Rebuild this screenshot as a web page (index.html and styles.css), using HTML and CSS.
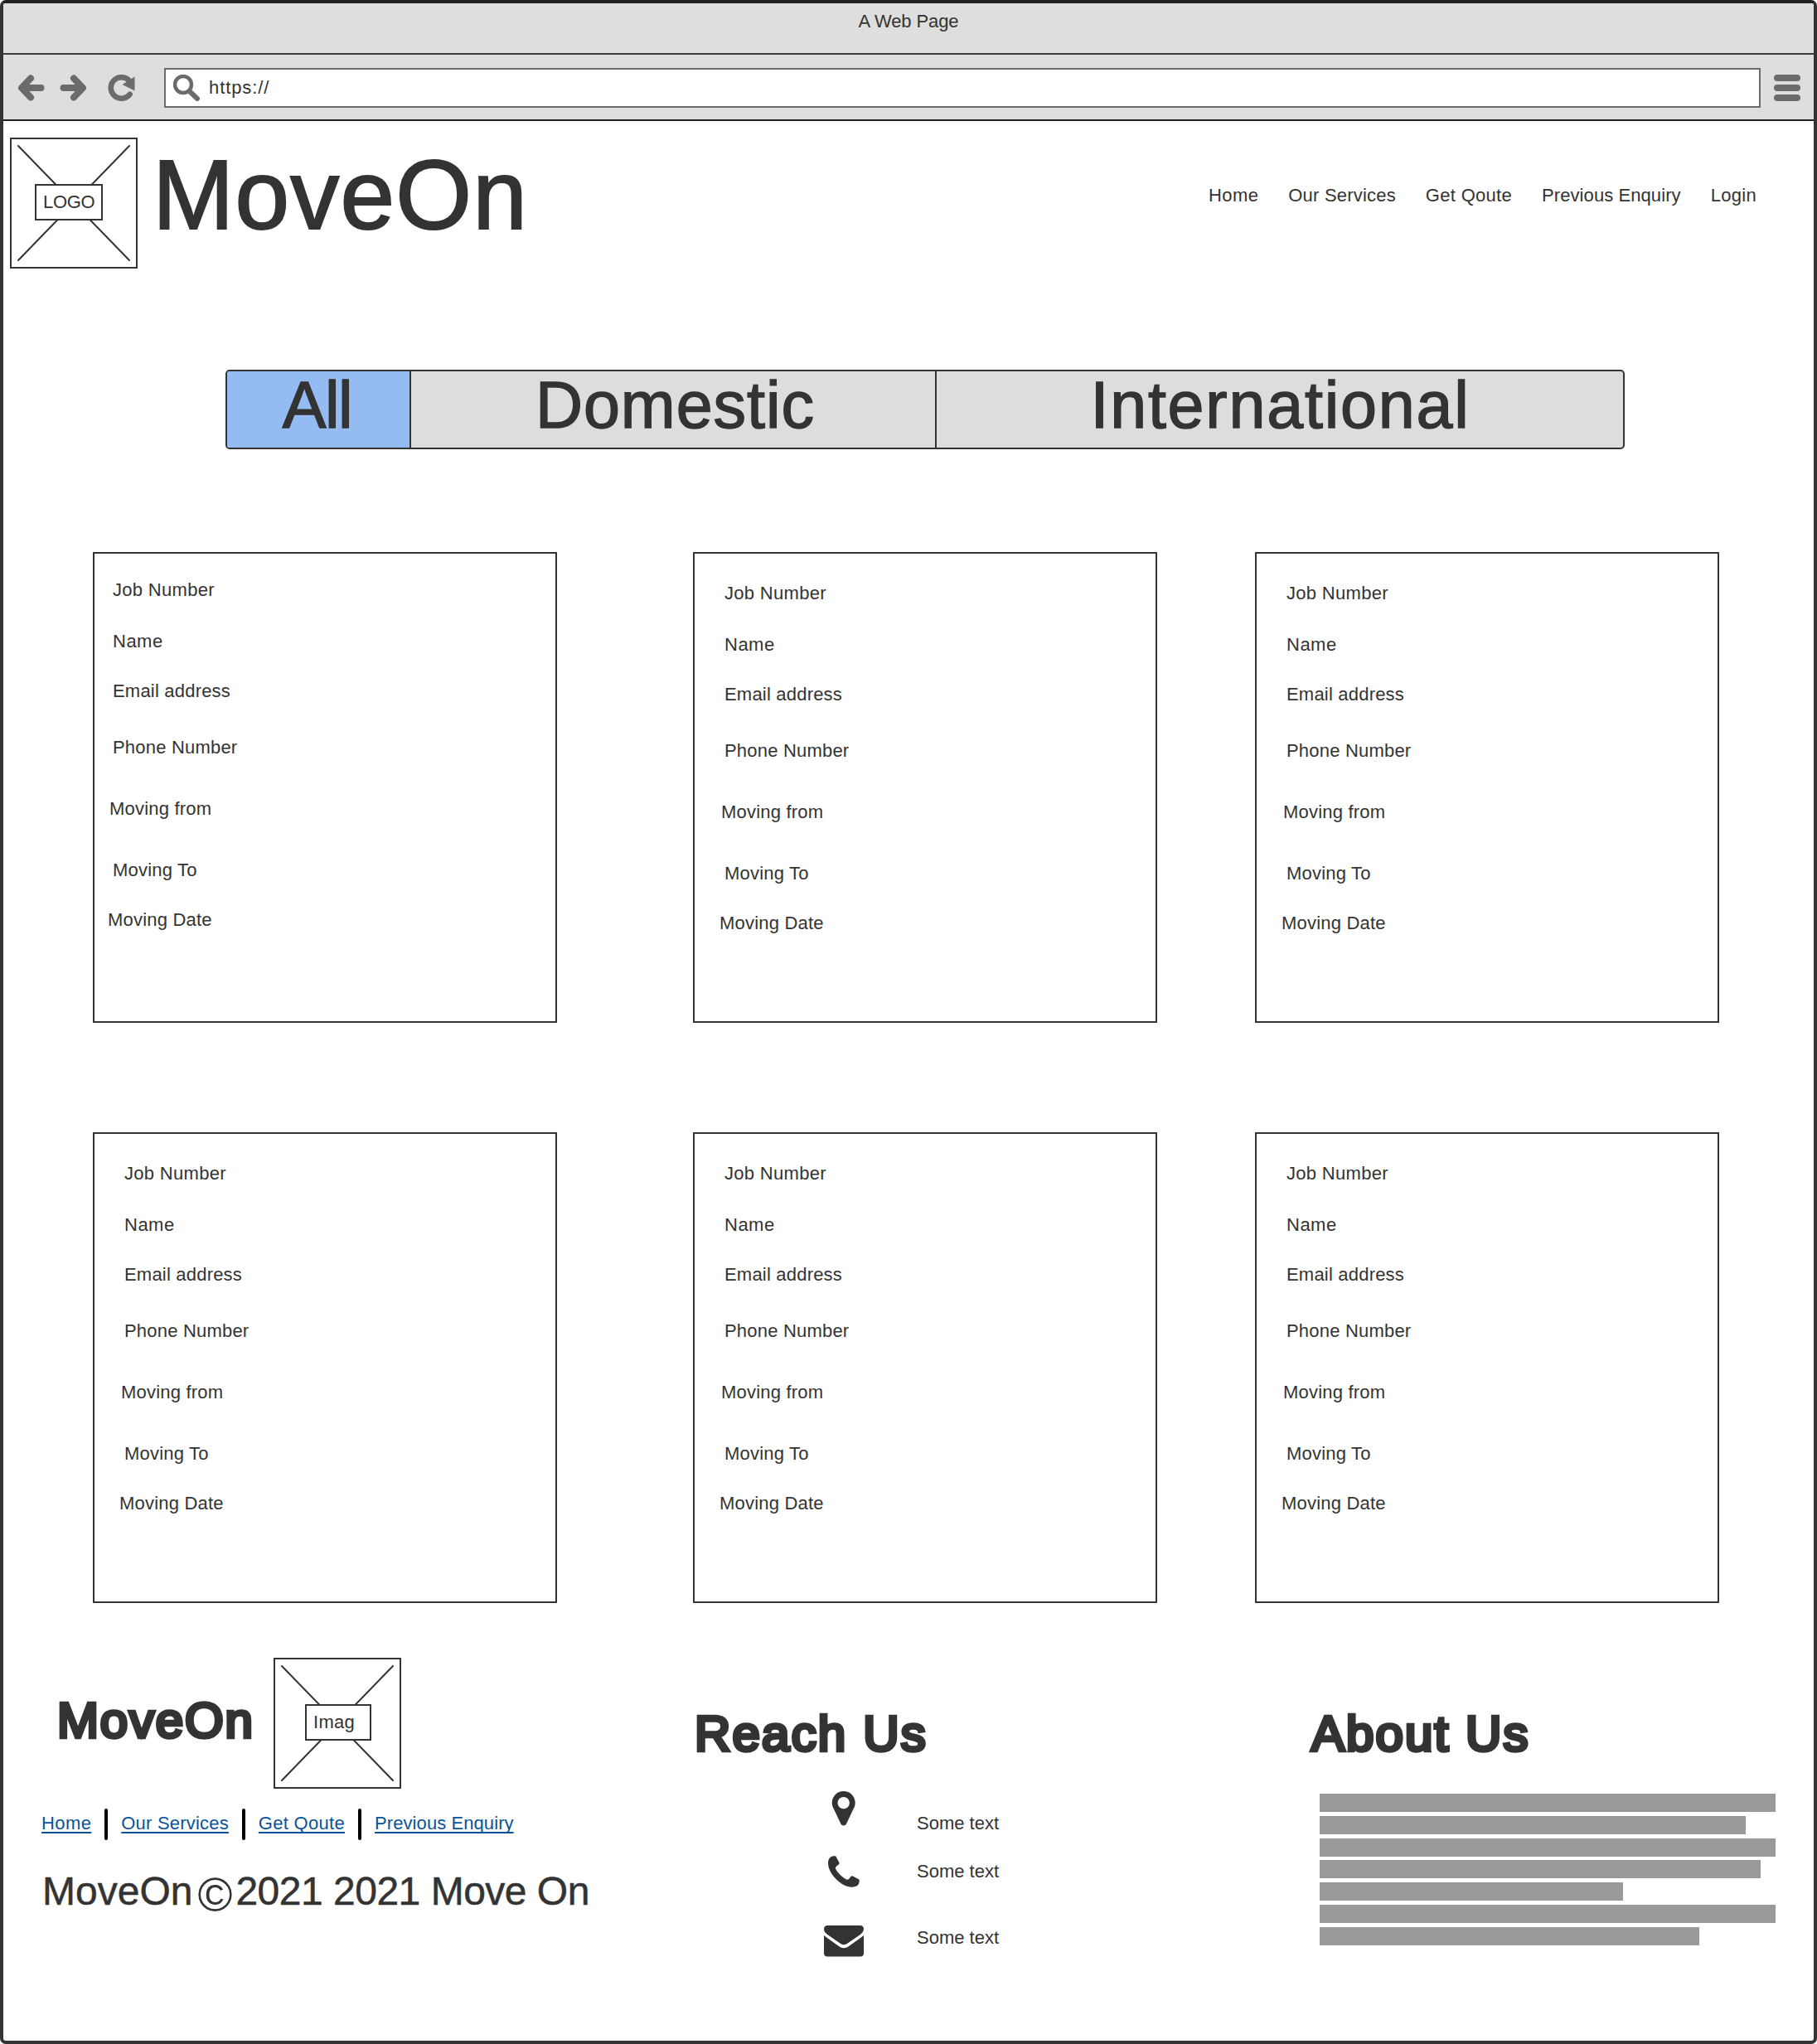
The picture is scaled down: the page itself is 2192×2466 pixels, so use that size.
FILE: index.html
```html
<!DOCTYPE html>
<html lang="en">
<head>
<meta charset="utf-8">
<title>A Web Page</title>
<link rel="stylesheet" href="styles.css">
</head>
<body>
<div class="window">
  <div class="titlebar">A Web Page</div>
  <div class="toolbar">
    <svg class="tool back" viewBox="0 0 32 32"><path d="M15.500 4.500L4.500 16L15.500 27.500M5 16H28"/></svg>
    <svg class="tool forward" viewBox="0 0 32 32"><path d="M16.500 4.500L27.500 16L16.500 27.500M27 16H4"/></svg>
    <svg class="tool reload" viewBox="0 0 32 32"><path class="ring" d="M25 6.800A12.800 12.800 0 1 0 26.200 23.700"/><path class="tip" d="M32 2.500V19.500L17 12Z"/></svg>
    <div class="address">
      <svg class="search" viewBox="0 0 32 32"><circle cx="12" cy="12" r="10"/><path d="M19.500 20L29 29"/></svg>
      <span class="url">https://</span>
    </div>
    <div class="menu"><i></i><i></i><i></i></div>
  </div>

  <header class="header">
    <div class="picture">
      <svg viewBox="0 0 150 154"><path d="M8 8L142 146M142 8L8 146"/></svg>
      <span class="caption">LOGO</span>
    </div>
    <h1 class="title">MoveOn</h1>
    <nav class="nav">
      <a class="nav-home">Home</a>
      <a class="nav-services">Our Services</a>
      <a class="nav-quote">Get Qoute</a>
      <a class="nav-enquiry">Previous Enquiry</a>
      <a class="nav-login">Login</a>
    </nav>
  </header>

  <div class="tabs">
    <div class="tab tab-all">All</div>
    <div class="tab tab-domestic">Domestic</div>
    <div class="tab tab-international">International</div>
  </div>

  <main class="jobs">
    <section class="card card-first">
      <p class="job">Job Number</p><p class="name">Name</p><p class="email">Email address</p><p class="phone">Phone Number</p><p class="from">Moving from</p><p class="to">Moving To</p><p class="date">Moving Date</p>
    </section>
    <section class="card">
      <p class="job">Job Number</p><p class="name">Name</p><p class="email">Email address</p><p class="phone">Phone Number</p><p class="from">Moving from</p><p class="to">Moving To</p><p class="date">Moving Date</p>
    </section>
    <section class="card">
      <p class="job">Job Number</p><p class="name">Name</p><p class="email">Email address</p><p class="phone">Phone Number</p><p class="from">Moving from</p><p class="to">Moving To</p><p class="date">Moving Date</p>
    </section>
    <section class="card">
      <p class="job">Job Number</p><p class="name">Name</p><p class="email">Email address</p><p class="phone">Phone Number</p><p class="from">Moving from</p><p class="to">Moving To</p><p class="date">Moving Date</p>
    </section>
    <section class="card">
      <p class="job">Job Number</p><p class="name">Name</p><p class="email">Email address</p><p class="phone">Phone Number</p><p class="from">Moving from</p><p class="to">Moving To</p><p class="date">Moving Date</p>
    </section>
    <section class="card">
      <p class="job">Job Number</p><p class="name">Name</p><p class="email">Email address</p><p class="phone">Phone Number</p><p class="from">Moving from</p><p class="to">Moving To</p><p class="date">Moving Date</p>
    </section>
  </main>

  <footer class="footer">
    <section class="brand">
      <div class="brand-row">
        <h2 class="brand-name">MoveOn</h2>
        <div class="picture">
          <svg viewBox="0 0 150 154"><path d="M8 8L142 146M142 8L8 146"/></svg>
          <span class="caption caption-image">Imag</span>
        </div>
      </div>
      <div class="links">
        <a class="nav-home">Home</a><i class="bar"></i>
        <a class="nav-services">Our Services</a><i class="bar"></i>
        <a class="nav-quote">Get Qoute</a><i class="bar"></i>
        <a class="nav-enquiry">Previous Enquiry</a>
      </div>
      <div class="copyright"><span>MoveOn</span><span class="sign">©</span><span class="years">2021 2021 Move On</span></div>
    </section>

    <section class="reach">
      <h2 class="reach-title">Reach Us</h2>
      <div class="contact contact-place">
        <svg viewBox="0 0 48 42"><path fill-rule="evenodd" d="M23.700 0C31.500 0 37.700 6.200 37.700 14C37.700 17 36.800 19 35.500 21.600L27 39.500C25.800 42.100 21.600 42.100 20.400 39.500L11.900 21.600C10.600 19 9.700 17 9.700 14C9.700 6.200 16 0 23.700 0ZM23.700 6.900A7.200 7.200 0 1 0 23.700 21.300A7.200 7.200 0 1 0 23.700 6.900Z"/></svg>
        <span>Some text</span>
      </div>
      <div class="contact contact-phone">
        <svg viewBox="0 0 48 38"><path d="M5 9C5 4.500 7 1.500 9.500 .7C11 .2 12.500 .1 13.800 .3C14.500 .5 15 1.500 15.400 2.500L18.200 7.800C18.900 9.200 18.500 9.700 17.300 10.800C15.500 12.200 13.900 13.200 13.900 14.600C13.900 17.500 21.500 26.500 28 28.600C29.800 29.200 31 26.800 32.200 25.300C33 24.200 33.800 24 34.800 24.500L41.500 28C42.800 28.700 42.900 29.200 42.700 30.500C42.400 33 41.700 35.300 39.800 36.300C35 38.800 28 38.200 20.500 33C11.500 26.700 5 17 5 9Z"/></svg>
        <span>Some text</span>
      </div>
      <div class="contact contact-mail">
        <svg viewBox="0 0 48 38"><path d="M4.500 0H43.500C46.500 0 48 1.700 48 4C48 7 46 9.500 43.500 11.300L30 20.500C28 22 26 23.300 24 23.300C22 23.300 20 22 18 20.500L4.500 11.300C2 9.500 0 7 0 4.500C0 1.700 1.500 0 4.500 0Z"/><path d="M0 12C5 16 11 20 16.500 24C19 26 21.500 27.300 24 27.300C26.500 27.300 29 26 31.500 24C37 20 43 16 48 12V33.500C48 36 46.500 37.500 44 37.500H4C1.500 37.500 0 36 0 33.500Z"/></svg>
        <span>Some text</span>
      </div>
    </section>

    <section class="about">
      <h2 class="about-title">About Us</h2>
      <div class="lines">
        <i style="width:550px"></i><i style="width:514px"></i><i style="width:550px"></i><i style="width:532px"></i><i style="width:366px"></i><i style="width:550px"></i><i style="width:458px"></i>
      </div>
    </section>
  </footer>
</div>
</body>
</html>
```
FILE: styles.css
```css
* { box-sizing: border-box; margin: 0; padding: 0; }
body {
  font: 22px/26px "Liberation Sans", Arial, sans-serif;
  color: #333;
  background: #fff;
}
svg { display: block; }

.window {
  width: 2192px;
  height: 2466px;
  border: 4px solid #333;
  border-top-color: #231f20;
  border-radius: 7px;
  overflow: hidden;
}

/* Browser chrome */
.titlebar {
  height: 62px;
  padding-top: 9px;
  border-bottom: 2px solid #3c3c3c;
  background: #dededc;
  text-align: center;
  letter-spacing: -0.1px;
}
.toolbar {
  display: flex;
  align-items: flex-start;
  height: 80px;
  padding: 16px 16px 0 17px;
  border-bottom: 2px solid #231f20;
  background: #dededc;
}
.tool {
  width: 33px;
  height: 32px;
  margin-top: 8px;
  fill: none;
  stroke: #6b6b6b;
  stroke-width: 8px;
  stroke-linecap: round;
  stroke-linejoin: round;
}
.forward { margin-left: 18px; }
.reload { margin-left: 25px; }
.reload .ring { stroke-width: 6.500px; }
.reload .tip { fill: #6b6b6b; stroke: none; }
.address {
  display: flex;
  flex: 1;
  height: 48px;
  margin-left: 35px;
  padding: 6px 0 0 9px;
  border: 2px solid #6b6b6b;
  background: #fff;
}
.search {
  width: 32px;
  height: 32px;
  fill: none;
  stroke: #6b6b6b;
  stroke-width: 4.500px;
  stroke-linecap: round;
}
.search path { stroke-width: 6px; }
.url { margin: 3px 0 0 11px; letter-spacing: 0.9px; }
.menu {
  display: grid;
  gap: 4px;
  width: 32px;
  margin: 8px 0 0 16px;
}
.menu i { height: 8px; border-radius: 4px; background: #6b6b6b; }

/* Page header */
.header {
  display: flex;
  align-items: flex-start;
  height: 300px;
  padding: 20px 69px 0 8px;
}
.picture {
  display: grid;
  width: 154px;
  height: 158px;
  border: 2px solid #333;
}
.picture svg, .caption { grid-area: 1 / 1; }
.picture svg { width: 150px; height: 154px; fill: none; stroke: #333; stroke-width: 2px; stroke-linecap: round; }
.caption {
  z-index: 1;
  width: 82px;
  height: 44px;
  margin: 54px 0 0 28px;
  padding: 7px 0 0 8px;
  border: 2px solid #333;
  background: #fff;
  letter-spacing: -0.3px;
}
.caption-image { width: 80px; margin-left: 36px; letter-spacing: 0.3px; }
.title {
  margin: 10px 0 0 18px;
  font-size: 118px;
  line-height: 118px;
  font-weight: 400;
  letter-spacing: 1.200px;
  -webkit-text-stroke: 2px #333;
}
.nav { display: flex; gap: 36px; margin: 57px 0 0 auto; }
.nav-home { letter-spacing: 0.4px; }
.nav-services { letter-spacing: 0.2px; }
.nav-quote { letter-spacing: 0.3px; }
.nav-enquiry { letter-spacing: 0.08px; }
.nav-login { letter-spacing: 0.3px; }

/* Filter tabs */
.tabs {
  display: grid;
  grid-template-columns: 220px 634px 1fr;
  width: 1688px;
  height: 96px;
  margin-left: 268px;
  border: 2px solid #333;
  border-radius: 5px;
  background: #ddd;
  font-size: 79px;
  line-height: 81px;
  text-align: center;
  -webkit-text-stroke: 1.500px #333;
}
.tab + .tab { border-left: 2px solid #333; }
.tab-all { border-radius: 3px 0 0 3px; background: #94bbf2; letter-spacing: -1.500px; padding-right: 3px; }
.tab-domestic { letter-spacing: 1px; padding-left: 5px; }
.tab-international { letter-spacing: 1.800px; padding-left: 1px; }

/* Job cards */
.jobs {
  display: grid;
  grid-template-columns: 724px 678px 560px;
  grid-auto-rows: 568px;
  row-gap: 132px;
  margin: 124px 0 0 108px;
}
.card {
  width: 560px;
  padding: 35px 0 0 36px;
  border: 2px solid #333;
  letter-spacing: 0.2px;
}
.card-first { padding: 31px 0 0 22px; }
.job { letter-spacing: 0.3px; }
.name { margin-top: 36px; letter-spacing: 0.5px; }
.email { margin-top: 34px; }
.phone { margin-top: 42px; }
.from { margin: 48px 0 0 -4px; }
.to { margin-top: 48px; }
.date { margin: 34px 0 0 -6px; }

/* Footer */
.footer {
  display: grid;
  grid-template-columns: 832px 744px 1fr;
}
.footer h2 {
  font-size: 60px;
  line-height: 64px;
  font-weight: 400;
  -webkit-text-stroke: 4.500px #333;
}
.brand { padding-top: 66px; }
.brand-row { display: flex; align-items: flex-start; padding-left: 65px; }
.brand-row .brand-name { width: 261px; margin-top: 44px; letter-spacing: 1.800px; }
.links {
  display: flex;
  align-items: flex-start;
  gap: 16px;
  height: 38px;
  margin: 24px 0 0 46px;
  color: #0a5499;
}
.links a {
  margin-top: 5px;
  text-decoration: underline;
  text-decoration-thickness: 2px;
  text-underline-offset: 3px;
  text-decoration-skip-ink: none;
}
.bar { width: 4px; height: 38px; border-radius: 2px; background: #000; }
.copyright {
  display: flex;
  align-items: flex-start;
  margin: 38px 0 0 47px;
  font-size: 48px;
  line-height: 48px;
  -webkit-text-stroke: 0.500px #333;
}
.sign { margin: 4px 4px 0 6px; font-size: 57px; -webkit-text-stroke: 0; }
.years { letter-spacing: -0.500px; }

.reach-title { margin: 126px 0 0 2px; letter-spacing: 2.200px; }
.contact { display: flex; align-items: flex-start; gap: 64px; margin-left: 158px; }
.contact svg { width: 48px; fill: #333; }
.contact-place { margin-top: 37px; }
.contact-place span { margin-top: 26px; }
.contact-phone { margin-top: 26px; }
.contact-phone span { margin-top: 6px; }
.contact-mail { margin-top: 46px; }
.contact-mail span { margin-top: 2px; }

.about-title { margin: 126px 0 0 2px; letter-spacing: 2.100px; }
.lines { display: grid; gap: 4.750px; margin: 40px 0 0 12px; }
.lines i { height: 22px; background: #999; }
```
